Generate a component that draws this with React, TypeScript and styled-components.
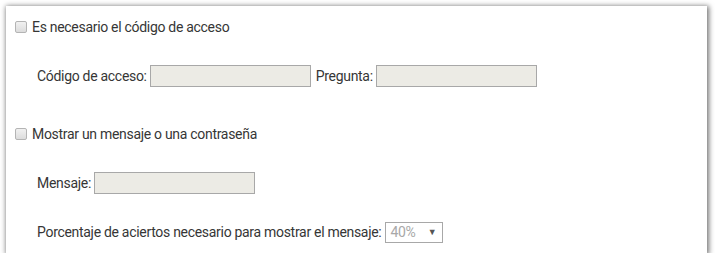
import React from "react";
import styled, { createGlobalStyle } from "styled-components";

const Global = createGlobalStyle`
  html, body { margin: 0; padding: 0; background: #ffffff; }
  body { font-family: "Roboto", "Liberation Sans", sans-serif; }
`;

const Panel = styled.div`
  margin: 6px 0 0 6px;
  width: 701px;
  height: 247px;
  box-sizing: border-box;
  background: #ffffff;
  box-shadow: 1px 1px 5px 1px rgba(0, 0, 0, 0.55);
  padding: 10px 0 0 9px;
  display: flex;
  flex-direction: column;
  gap: 36px;
`;

const Section = styled.div`
  display: flex;
  flex-direction: column;
  gap: 27px;
`;

const Row = styled.div<{ $indent?: boolean }>`
  height: 22px;
  display: flex;
  align-items: center;
  padding-left: ${(p) => (p.$indent ? "22px" : "0")};
  font-size: 14px;
  letter-spacing: -0.3px;
  color: #363636;
  white-space: nowrap;
`;

const Check = styled.span`
  width: 10px;
  height: 10px;
  border: 1px solid #b4b4b4;
  border-radius: 2px;
  background: linear-gradient(#f1f1f1, #dcdcdc);
  margin-right: 5px;
  flex: none;
`;

const Label = styled.span`
  margin-right: 3px;
`;

const Field = styled.span<{ $w: number }>`
  width: ${(p) => p.$w}px;
  height: 22px;
  box-sizing: border-box;
  border: 1px solid #a8a8a8;
  background: #ecebe5;
  margin-right: 5px;
  flex: none;
`;

const Select = styled.span`
  width: 58px;
  height: 21px;
  box-sizing: border-box;
  border: 1px solid #a8a8a8;
  background: #ffffff;
  margin-left: 1px;
  display: flex;
  align-items: center;
  justify-content: space-between;
  padding: 0 6px 0 4px;
  color: #a8a8a8;
  font-size: 14px;
`;

const Arrow = styled.span`
  font-size: 9px;
  color: #555555;
`;

export default function App() {
  return (
    <>
      <Global />
      <Panel>
        <Section>
          <Row>
            <Check />
            Es necesario el código de acceso
          </Row>
          <Row $indent>
            <Label>Código de acceso:</Label>
            <Field $w={161} />
            <Label>Pregunta:</Label>
            <Field $w={161} />
          </Row>
        </Section>
        <Section>
          <Row>
            <Check />
            Mostrar un mensaje o una contraseña
          </Row>
          <Row $indent>
            <Label>Mensaje:</Label>
            <Field $w={161} />
          </Row>
          <Row $indent>
            <Label>Porcentaje de aciertos necesario para mostrar el mensaje:</Label>
            <Select>
              40%
              <Arrow>▼</Arrow>
            </Select>
          </Row>
        </Section>
      </Panel>
    </>
  );
}
